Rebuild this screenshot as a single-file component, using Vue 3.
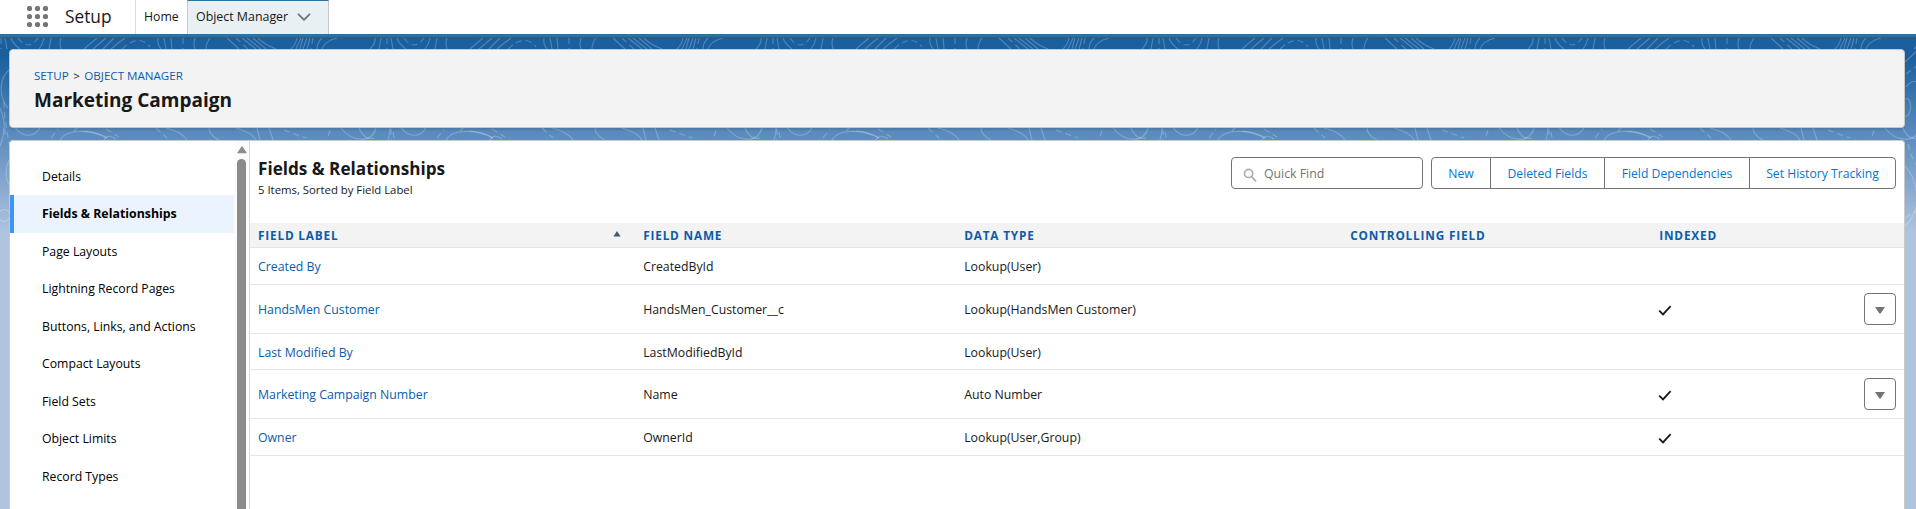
<script setup>
const sections = [
  'Details',
  'Fields & Relationships',
  'Page Layouts',
  'Lightning Record Pages',
  'Buttons, Links, and Actions',
  'Compact Layouts',
  'Field Sets',
  'Object Limits',
  'Record Types',
]
const selected = 'Fields & Relationships'
const actions = ['New', 'Deleted Fields', 'Field Dependencies', 'Set History Tracking']
const columns = ['Field Label', 'Field Name', 'Data Type', 'Controlling Field', 'Indexed']
const rows = [
  { label: 'Created By', name: 'CreatedById', type: 'Lookup(User)', indexed: false, menu: false },
  { label: 'HandsMen Customer', name: 'HandsMen_Customer__c', type: 'Lookup(HandsMen Customer)', indexed: true, menu: true },
  { label: 'Last Modified By', name: 'LastModifiedById', type: 'Lookup(User)', indexed: false, menu: false, short: true },
  { label: 'Marketing Campaign Number', name: 'Name', type: 'Auto Number', indexed: true, menu: true },
  { label: 'Owner', name: 'OwnerId', type: 'Lookup(User,Group)', indexed: true, menu: false },
]
const dots = [0, 1, 2, 3, 4, 5, 6, 7, 8].map((i) => ({ x: 2.5 + (i % 3) * 8, y: 2.5 + Math.floor(i / 3) * 8 }))
</script>

<template>
  <div class="page">
    <header class="topbar">
      <svg class="launcher" width="22" height="22" viewBox="0 0 22 22">
        <circle v-for="(d, i) in dots" :key="i" :cx="d.x" :cy="d.y" r="2.6" fill="#747474" />
      </svg>
      <span class="app-name">Setup</span>
      <nav class="tabs">
        <a class="tab">Home</a>
        <a class="tab active">
          Object Manager
          <svg class="chevron" width="14" height="9" viewBox="0 0 14 9">
            <path d="M1.5 1.3 L7 6.8 L12.5 1.3" fill="none" stroke="#747474" stroke-width="1.8" stroke-linecap="round" stroke-linejoin="round" />
          </svg>
        </a>
      </nav>
    </header>

    <main class="canvas">
      <svg class="contours" width="1916" height="200">
        <defs>
          <pattern id="topo" x="0" y="-37" width="386" height="260" patternUnits="userSpaceOnUse">
            <g fill="none" stroke="#fff" stroke-opacity=".23" stroke-width="1.1">
              <path d="M84 49 Q91 43 97 38 M93 49 Q100 43 106 38 M103 49 L114 38 M111 49 Q118 43 125 38" />
              <path d="M158 38 Q157 44 161 49 M164 38 L166 49 M171 38 L172 49 M195 38 Q193 44 195 49 M210 38 Q206 43 206 49" />
              <path d="M227 38 L239 49 M242 38 L256 49 M247 38 L261 49 M253 38 L266 49 M258 38 Q265 45 276 49" />
              <path d="M297 38 Q296 44 291 49 M301 38 L296 49 M303 38 L300 49 M307 38 L303 49 M310 38 L307 49 M322 38 Q317 43 317 49 M337 38 Q325 41 322 49" />
              <path d="M375 38 Q376 43 370 49 M381 38 L379 49 M5 38 L7 49 M11 38 Q13 44 20 49 M44 38 Q43 44 39 49 M51 38 L49 49 M61 38 Q59 43 61 49" />
              <path stroke-dasharray="6 4" d="M122 49 Q139 33 150 47 M183 38 V49 M236 38 L248 49 M313 38 L311 49 M1 38 V49 M18 38 Q28 52 38 38" />
              <path d="M84 131 Q98 132 107 138 M166 128 Q182 132 187 140 M209 128 Q209 135 219 140 M236 128 Q253 133 256 140 M257 128 L260 140 M269 128 L273 140" />
              <path d="M341 128 C353 143 372 143 376 128 M13 122 C18 140 38 138 40 126 M60 140 C65 130 88 128 107 138 M74 131 L78 127 M104 140 Q108 133 116 139" />
              <path stroke-dasharray="6 4" d="M106 129 L119 137 M156 128 L167 138 M284 130 L306 138 M330 130 L327 140 M5 129 V140 M51 138 L58 129" />
              <path d="M10 69 C-1 78 -2 95 8 108 M0 108 C5 120 6 130 0 146 M9 160 C5 168 5 180 10 186 M0 212 C3 208 7 209 10 213 M0 220 Q6 224 10 217" />
              <path d="M361 99 C368 95 369 117 361 116 M361 166 C372 178 377 200 370 213 Q366 222 361 226 M358 126 Q364 141 374 138 M361 62 L374 50 M362 87 Q367 80 374 82" />
              <path stroke-dasharray="6 4" d="M4 102 C4 120 8 135 10 150 M364 144 Q368 160 372 164 M362 74 L373 66 M361 218 L373 211" />
            </g>
          </pattern>
        </defs>
        <rect y="1" width="1916" height="199" fill="url(#topo)" />
      </svg>

      <section class="page-header">
        <div class="crumbs"><a>SETUP</a><span>&gt;</span><a>OBJECT MANAGER</a></div>
        <h1>Marketing Campaign</h1>
      </section>

      <section class="panel">
        <aside class="sidebar">
          <ul class="section-list">
            <li v-for="s in sections" :key="s" :class="{ selected: s === selected }">{{ s }}</li>
          </ul>
          <div class="scrollbar">
            <svg width="10" height="8" viewBox="0 0 10 8"><path d="M5 .6 L9.2 6.8 H.8 Z" fill="#8b8b8b" stroke="#8b8b8b" stroke-linejoin="round" /></svg>
            <div class="thumb"></div>
          </div>
        </aside>

        <div class="content">
          <div class="toolbar">
            <div class="heading">
              <h2>Fields &amp; Relationships</h2>
              <p>5 Items, Sorted by Field Label</p>
            </div>
            <div class="search">
              <svg width="14" height="14" viewBox="0 0 14 14" fill="none" stroke="#aeaeae" stroke-width="1.7">
                <circle cx="5.6" cy="5.4" r="4.1" /><path d="M8.6 8.6 L12.6 12.8" stroke-linecap="round" />
              </svg>
              <span>Quick Find</span>
            </div>
            <div class="actions">
              <button v-for="a in actions" :key="a">{{ a }}</button>
            </div>
          </div>

          <div class="table">
            <div class="row head">
              <div v-for="(c, i) in columns" :key="c" class="cell">
                {{ c }}
                <svg v-if="i === 0" class="sort" width="8" height="6" viewBox="0 0 8 6"><path d="M4 0 L7.6 5.6 H.4 Z" fill="#3f5b7c" /></svg>
              </div>
              <div></div>
            </div>
            <div v-for="r in rows" :key="r.label" class="row body" :class="{ tall: r.menu, short: r.short }">
              <div class="cell"><a>{{ r.label }}</a></div>
              <div class="cell">{{ r.name }}</div>
              <div class="cell">{{ r.type }}</div>
              <div class="cell"></div>
              <div class="cell">
                <svg v-if="r.indexed" class="check" width="14" height="11" viewBox="0 0 14 11">
                  <path d="M1.2 5.6 L5 9.4 L12.6 1.2" fill="none" stroke="#181818" stroke-width="1.8" />
                </svg>
              </div>
              <div class="menu-cell">
                <button v-if="r.menu" class="menu">
                  <svg width="10" height="7" viewBox="0 0 10 7"><path d="M0 0 H10 L5.6 6.5 H4.4 Z" fill="#747474" /></svg>
                </button>
              </div>
            </div>
          </div>
        </div>
      </section>
    </main>
  </div>
</template>

<style>
body {
  margin: 0;
  overflow: hidden;
}
</style>

<style scoped>
.page {
  width: 1916px;
  height: 509px;
  display: flex;
  flex-direction: column;
  overflow: hidden;
  background: #fff;
  color: #181818;
  font: 12.3px/18px "Open Sans", "Noto Sans", sans-serif;
}
.topbar {
  box-sizing: border-box;
  height: 37px;
  flex: none;
  display: flex;
  align-items: stretch;
  padding-left: 27px;
  border-bottom: 3px solid #2a739e;
}
.launcher {
  margin-top: 6px;
}
.app-name {
  box-sizing: border-box;
  width: 86px;
  padding-left: 16px;
  font-size: 17.3px;
  line-height: 34px;
}
.tabs {
  display: flex;
  border-left: 1px solid #dddbda;
}
.tab {
  box-sizing: border-box;
  width: 51px;
  padding-left: 8px;
  line-height: 33px;
  white-space: nowrap;
}
.tab.active {
  width: 142px;
  display: flex;
  justify-content: space-between;
  padding: 0 17px 0 8px;
  line-height: 31px;
  background: #e8f0f3;
  border: solid #c9c9c9;
  border-width: 0 1px;
  border-top: 1px solid #2a739e;
  font-size: 12.4px;
}
.chevron {
  margin-top: 12px;
}
.canvas {
  position: relative;
  flex: 1;
  min-height: 0;
  display: flex;
  flex-direction: column;
  padding: 12px 11px 0 9px;
  background: linear-gradient(#1b5f9e 0, #1b5f9e 20px, #5f8fc0 103px, #b0c4df 196px);
}
.contours {
  position: absolute;
  left: 0;
  top: 0;
}
.page-header {
  position: relative;
  box-sizing: border-box;
  height: 79px;
  flex: none;
  padding: 17px 24px 0;
  background: #f3f3f3;
  border: 1px solid #c9c9c9;
  border-radius: 4px;
  box-shadow: 0 2px 2px rgba(0, 0, 0, 0.1);
}
.crumbs {
  display: flex;
  gap: 4.5px;
  font-size: 11.6px;
  line-height: 18px;
}
a {
  color: #0b5cab;
}
.tab {
  color: #181818;
}
h1 {
  margin: 3px 0 0;
  font-size: 19px;
  line-height: 25px;
  font-weight: 700;
}
.panel {
  position: relative;
  flex: 1;
  min-height: 0;
  display: flex;
  margin-top: 12px;
  background: #fff;
  border: 1px solid #c9c9c9;
  border-bottom: 0;
  border-radius: 4px 4px 0 0;
  overflow: hidden;
}
.sidebar {
  box-sizing: border-box;
  width: 240px;
  flex: none;
  display: flex;
  border-right: 1px solid #dddbda;
}
.section-list {
  flex: 1;
  margin: 0;
  padding: 16.8px 0 0;
  list-style: none;
}
.section-list li {
  box-sizing: border-box;
  height: 37.5px;
  padding-left: 32px;
  line-height: 38.2px;
  font-size: 12.25px;
  color: #000;
}
.section-list li.selected {
  padding-left: 28px;
  border-left: 4px solid #3f94f8;
  background: #ebf4fe;
  font-size: 12.35px;
  font-weight: 700;
}
.scrollbar {
  width: 15px;
  display: flex;
  flex-direction: column;
  align-items: center;
  padding-top: 5px;
  background: #fcfcfc;
}
.thumb {
  width: 9px;
  flex: 1;
  margin-top: 5px;
  border-radius: 5px 5px 0 0;
  background: #8b8b8b;
}
.content {
  flex: 1;
  min-width: 0;
}
.toolbar {
  box-sizing: border-box;
  height: 82px;
  display: flex;
  align-items: flex-start;
  padding: 16px 8px 0;
}
.heading {
  flex: 1;
}
h2 {
  margin: 0;
  font-size: 17.15px;
  line-height: 24px;
  font-weight: 700;
}
p {
  margin: 1px 0 0;
  font-size: 11.35px;
  line-height: 16px;
}
.search {
  box-sizing: border-box;
  width: 192px;
  height: 32px;
  display: flex;
  align-items: center;
  gap: 7px;
  margin-right: 8px;
  padding-left: 11px;
  border: 1px solid #747474;
  border-radius: 4px;
  color: #747474;
}
.search svg {
  margin-top: 3px;
}
.search span {
  padding-top: 2px;
}
.actions {
  display: flex;
  height: 32px;
  box-sizing: border-box;
  border: 1px solid #747474;
  border-radius: 4px;
}
.actions button {
  box-sizing: border-box;
  padding: 2px 0 0;
  border: 0;
  background: none;
  font: inherit;
  font-size: 12.2px;
  color: #0176d3;
}
.actions button + button {
  border-left: 1px solid #747474;
}
.actions button:nth-child(1) { width: 58px; }
.actions button:nth-child(2) { width: 114px; }
.actions button:nth-child(3) { width: 145px; }
.actions button:nth-child(4) { width: 146px; }
.row {
  box-sizing: border-box;
  height: 37px;
  display: grid;
  grid-template-columns: 385.2px 321px 386px 309px 1fr 48px;
  align-items: center;
  border-bottom: 1px solid #e5e5e5;
}
.row.tall {
  height: 49px;
}
.row.short {
  height: 36px;
}
.row.head {
  height: 25px;
  background: #f3f3f3;
  color: #0b5cab;
  font-size: 11.8px;
  font-weight: 700;
  letter-spacing: 0.82px;
  text-transform: uppercase;
}
.cell {
  display: flex;
  align-items: center;
  justify-content: space-between;
  padding: 0 13px 0 8px;
  white-space: nowrap;
}
.body .cell {
  padding-top: 2px;
}
.sort {
  margin: -2px 1px 0 0;
}
.check {
  margin: 1px 0 0 -1px;
}
.menu-cell {
  display: flex;
  justify-content: flex-end;
  padding-right: 8px;
}
.menu {
  box-sizing: border-box;
  width: 32px;
  height: 32px;
  display: flex;
  align-items: center;
  justify-content: center;
  padding: 2px 0 0;
  border: 1px solid #747474;
  border-radius: 4px;
  background: #fff;
}
</style>
